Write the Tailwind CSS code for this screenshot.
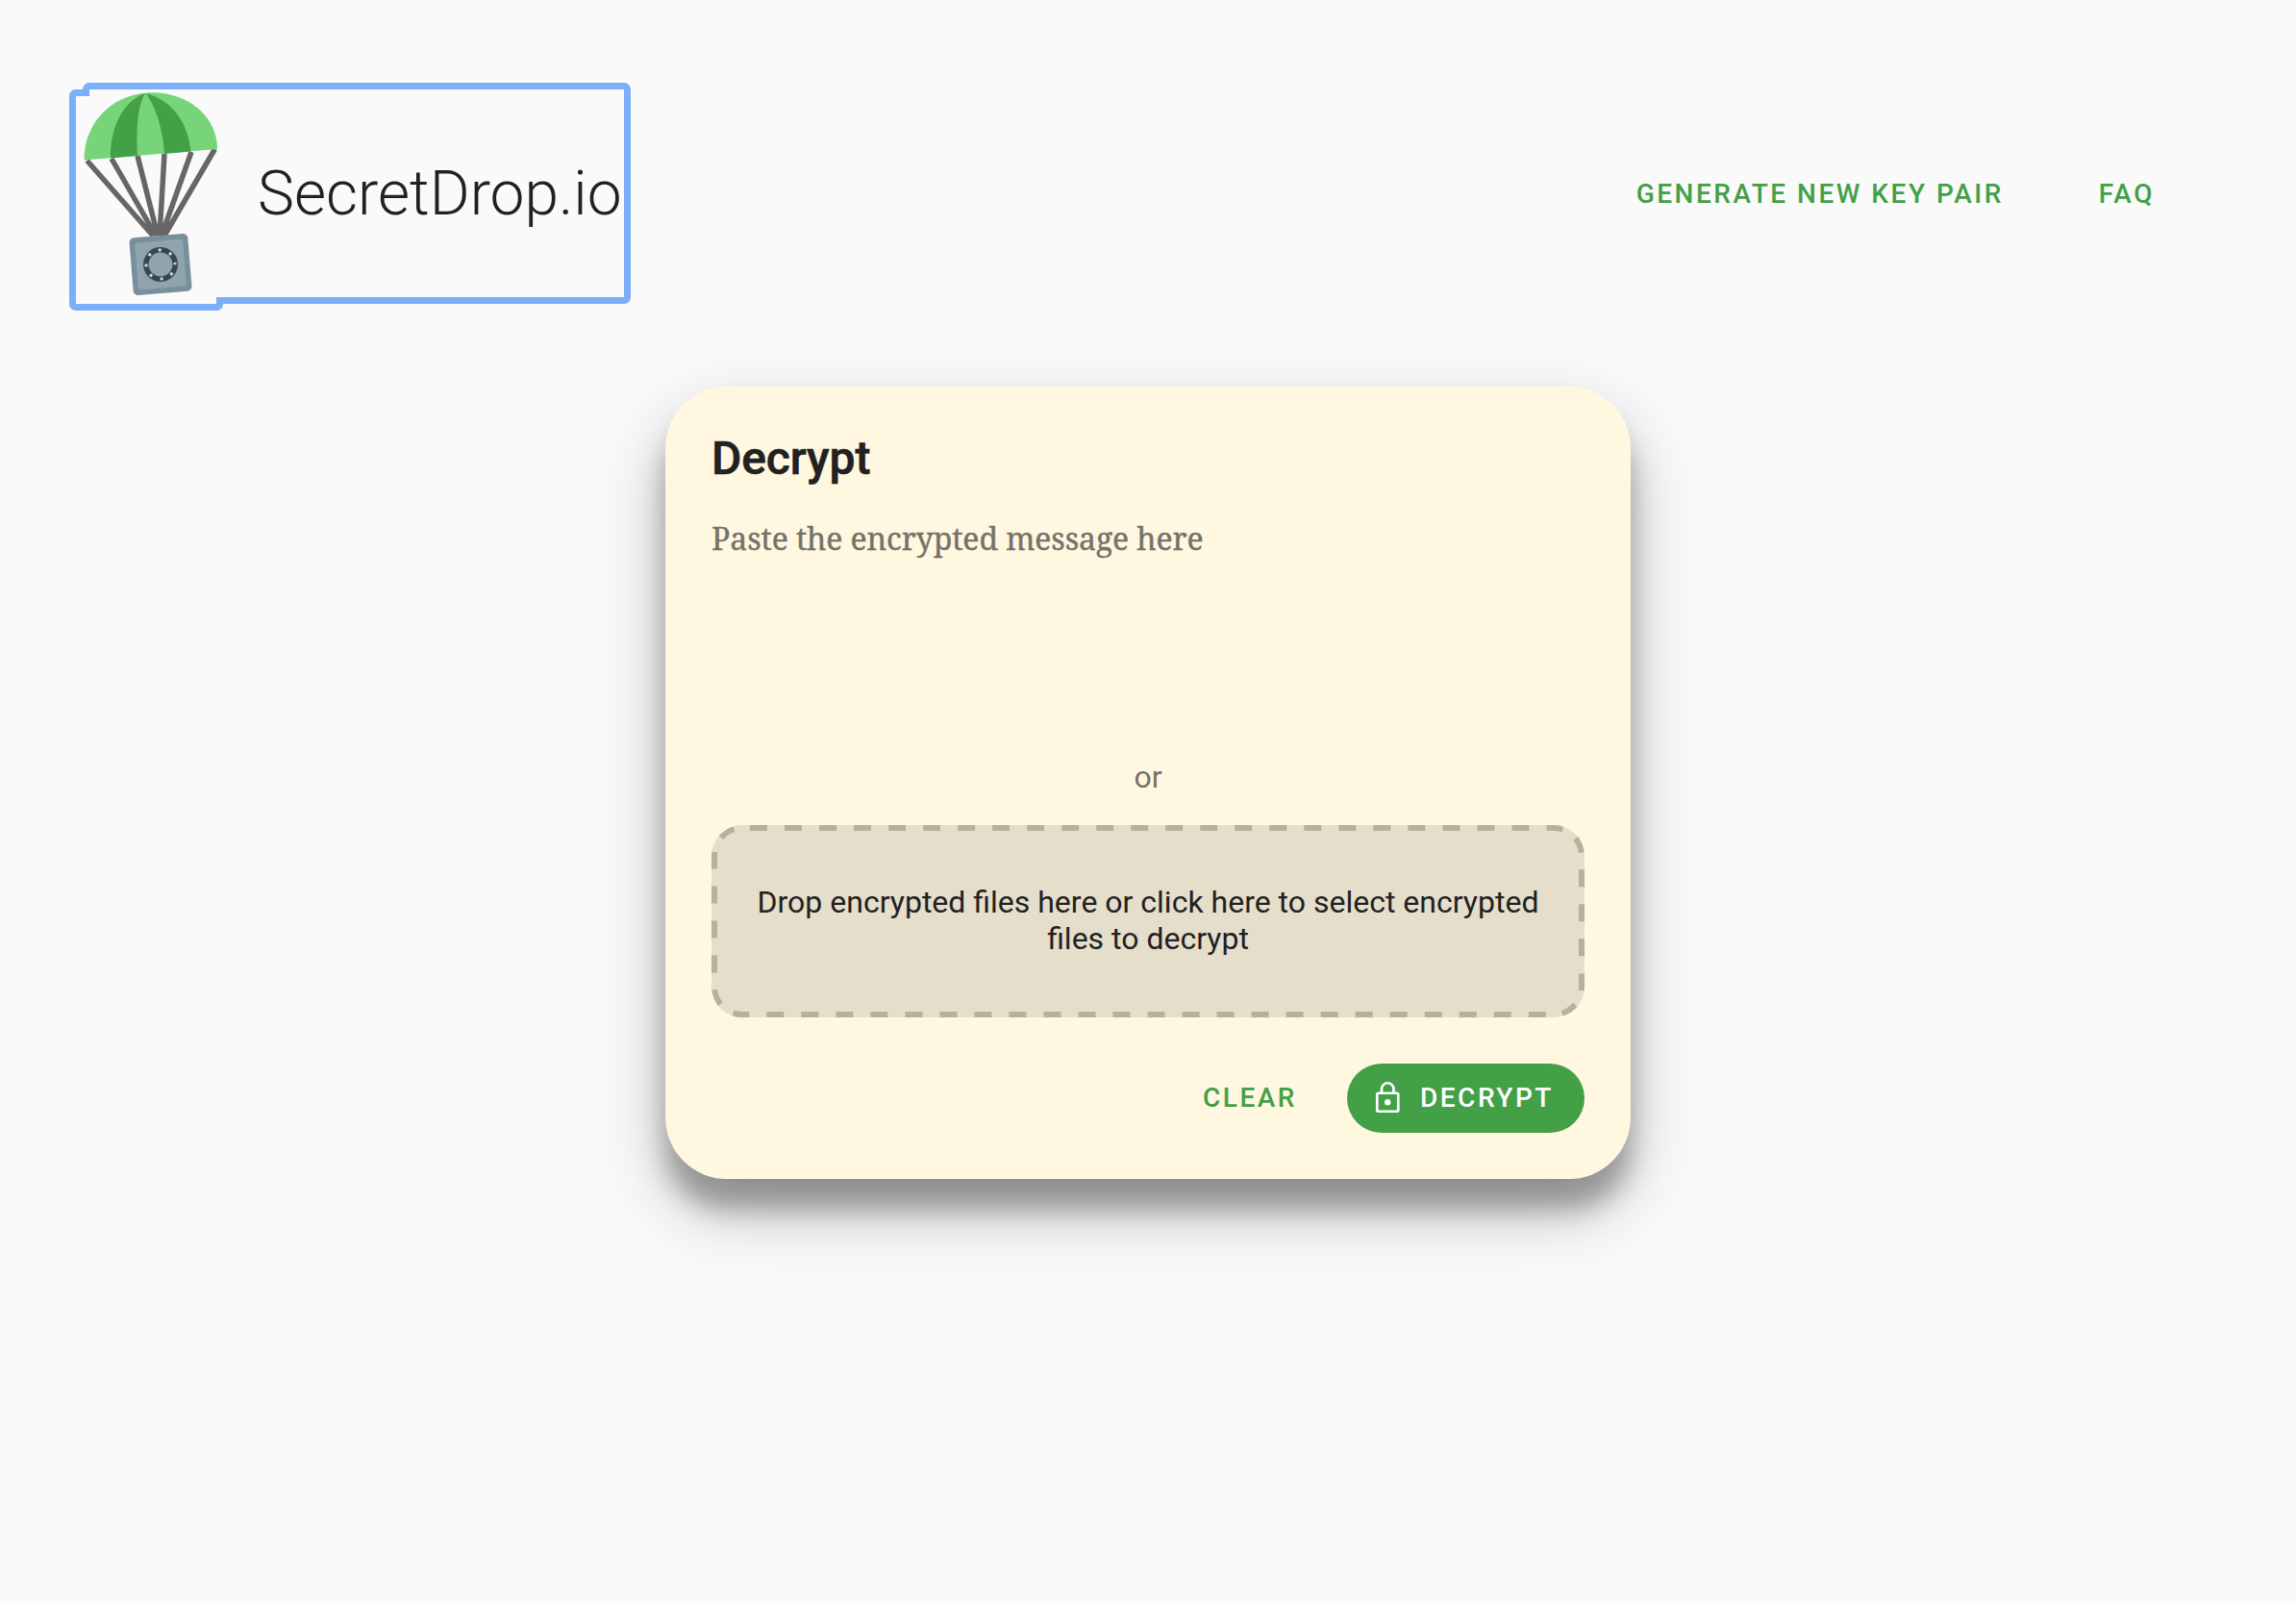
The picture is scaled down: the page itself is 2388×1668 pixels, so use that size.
<!DOCTYPE html>
<html lang="en">
<head>
<meta charset="utf-8">
<title>SecretDrop.io</title>
<script src="https://cdn.jsdelivr.net/npm/@tailwindcss/browser@4"></script>
</head>
<body class="min-h-screen bg-[#fafafa] font-[Roboto,sans-serif] text-[#212121]">
<header class="flex h-[402px] items-start justify-between pl-[72px] pr-[149px] pt-[86px]">
  <a href="#" class="relative flex h-[237px] w-[584px]">
    <svg class="absolute inset-0 h-[237px] w-[584px]" viewBox="72 86 584 237" fill="none">
      <path d="M93 96.500H78.500a3 3 0 0 0-3 3V316a3.500 3.500 0 0 0 3.500 3.500H225.500a3 3 0 0 0 3-3V312.500H649a3.500 3.500 0 0 0 3.500-3.500V93a3.500 3.500 0 0 0-3.500-3.500H93a3.500 3.500 0 0 0-3.500 3.500V96.500" stroke="#7baff8" stroke-width="7"/>
      <path d="M90.500 167 159 245M116 165 162 245M143 162 164 245M171 160 166 245M199 158 168 245M223.500 155 171 245" stroke="#666" stroke-width="5.500"/>
      <path d="M87.500 166.500C87 129 115 99 153 96.500S226 118 226 155Z" fill="#78d478"/>
      <path d="M115 164.500C114 135 127 105 151 97C142 112 142 137 143 162ZM151.500 97C162 110 170 137 171 160L198.500 157.500C195 125 178 104 151.500 97Z" fill="#43a047"/>
      <g transform="rotate(-4.700 167 275)">
        <rect x="136.500" y="245" width="61" height="60" rx="5" fill="#78909c"/>
        <rect x="142" y="250.500" width="50" height="49" rx="3" fill="#90a4ae"/>
        <circle cx="167" cy="275" r="15.200" stroke="#37474f" stroke-width="5.500"/>
        <circle cx="167" cy="275" r="15" stroke="#cfd8dc" stroke-width="3" stroke-dasharray="3 8.781" stroke-dashoffset="1.500"/>
      </g>
    </svg>
    <span class="ml-[196px] mt-[78px] text-[64px] font-light leading-[75px] whitespace-nowrap">SecretDrop.io</span>
  </a>
  <nav class="flex gap-[99px] pt-[99px] text-[28px] font-medium leading-[34px] tracking-[2.500px] text-[#43a047]">
    <a href="#">GENERATE NEW KEY PAIR</a>
    <a href="#" class="-mr-[2px]">FAQ</a>
  </nav>
</header>
<main class="mx-auto flex h-[824px] w-[1004px] flex-col rounded-[64px] bg-[#fff7e0] px-12 pt-[47px] pb-12 shadow-[0_31px_26px_0_rgba(0,0,0,0.27),0_32px_72px_0_rgba(0,0,0,0.26)]">
  <h1 class="text-[48px] font-medium leading-[56px] tracking-[-0.1px] [-webkit-text-stroke:0.6px_currentColor]">Decrypt</h1>
  <p class="mt-[33px] h-[228px] font-['Roboto_Slab','Noto_Serif',serif] text-[32px] leading-[44px] tracking-[-0.1px] text-[#757168] [-webkit-text-stroke:0.4px_currentColor]">Paste the encrypted message here</p>
  <p class="mt-[23px] text-center text-[32px] leading-[38px] text-[#757168]">or</p>
  <button class="relative mt-[31px] flex h-[200px] w-full items-center justify-center overflow-hidden rounded-[32px] bg-[#e5deca] px-[38px] pb-[2px] text-center text-[32px] leading-[38px]">
    <svg class="absolute inset-0 h-[200px] w-[908px]" viewBox="0 0 908 200" fill="none"><rect width="908" height="200" rx="32" stroke="#b8b09f" stroke-width="12" stroke-dasharray="18.010 18.010" stroke-dashoffset="-8"/></svg>
    Drop encrypted files here or click here to select encrypted files to decrypt
  </button>
  <div class="mt-12 flex h-[72px] items-center justify-end text-[28px] font-medium tracking-[2.500px]">
    <button class="mr-[52px] text-[#43a047]">CLEAR</button>
    <button class="flex h-[72px] w-[247px] items-center rounded-full bg-[#43a047] pl-[24px] text-white">
      <svg class="mr-[16px] h-9 w-9" viewBox="0 0 36 36" fill="none" stroke="white"><rect x="7.250" y="12.750" width="22" height="19" rx="1.500" stroke-width="2.700"/><path d="M12 12.500V8.500a6.250 6.250 0 0 1 12.500 0v4" stroke-width="2.700"/><circle cx="18.250" cy="22.200" r="3.200" fill="white" stroke="none"/></svg>
      DECRYPT
    </button>
  </div>
</main>
</body>
</html>
